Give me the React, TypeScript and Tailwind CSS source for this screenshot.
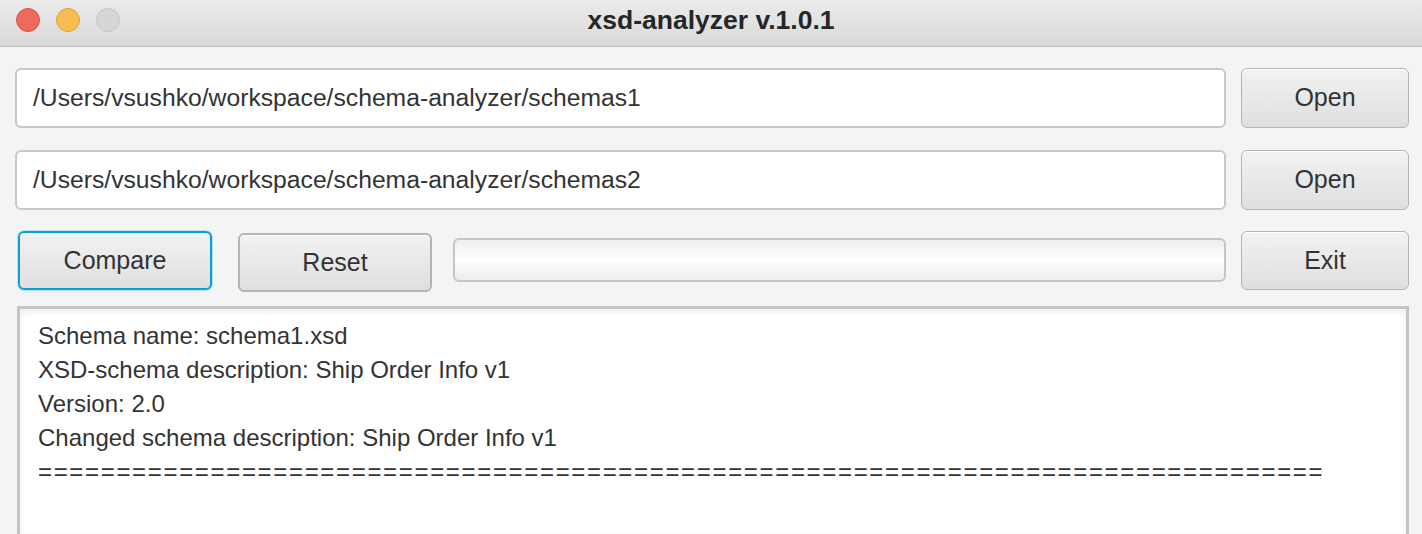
export default function App() {
  const font = { fontFamily: '"Liberation Sans", Arial, sans-serif' };
  const btn =
    "flex items-center justify-center rounded-[6px] border border-[#b4b4b4] bg-gradient-to-b from-[#f2f2f2] to-[#dfdfdf] text-[25px] text-[#333333] shadow-[inset_0_1px_0_#ffffff]";
  const field =
    "flex items-center rounded-[6px] border-2 border-[#c8c8c8] bg-white px-[16px] text-[24.7px] text-[#333333]";
  const lines = [
    "Schema name: schema1.xsd",
    "XSD-schema description: Ship Order Info v1",
    "Version: 2.0",
    "Changed schema description: Ship Order Info v1",
  ];

  return (
    <div className="flex h-[534px] w-[1422px] flex-col overflow-hidden bg-[#f4f4f4]" style={font}>
      <div className="relative flex h-[47px] shrink-0 items-center justify-center border-b border-[#bdbdbd] bg-gradient-to-b from-[#ebebeb] to-[#d9d9d9]">
        <div className="absolute left-[16px] top-[8px] flex gap-[16px]">
          <span className="h-[24px] w-[24px] rounded-full border border-[#d9534c] bg-[#ee6a5f]" />
          <span className="h-[24px] w-[24px] rounded-full border border-[#d9a23c] bg-[#f5be4f]" />
          <span className="h-[24px] w-[24px] rounded-full border border-[#c4c4c4] bg-[#d6d6d6]" />
        </div>
        <span className="-mt-[4px] text-[26.5px] font-bold text-[#262626]">xsd-analyzer v.1.0.1</span>
      </div>

      <div className="flex flex-1 flex-col pl-[15px] pr-[13px] pt-[21px]">
        <div className="flex gap-[15px]">
          <div className={`${field} h-[60px] flex-1`}>/Users/vsushko/workspace/schema-analyzer/schemas1</div>
          <div className={`${btn} h-[60px] w-[168px]`}>Open</div>
        </div>
        <div className="mt-[22px] flex gap-[15px]">
          <div className={`${field} h-[60px] flex-1`}>/Users/vsushko/workspace/schema-analyzer/schemas2</div>
          <div className={`${btn} h-[60px] w-[168px]`}>Open</div>
        </div>
        <div className="mt-[21px] flex items-start">
          <div className="ml-[3px] flex h-[59px] w-[194px] items-center justify-center rounded-[6px] border-2 border-[#0a9fd8] bg-gradient-to-b from-[#f2f2f2] to-[#dfdfdf] text-[25px] text-[#333333] shadow-[0_0_0_1px_#b9e2f3]">
            Compare
          </div>
          <div className={`${btn} ml-[26px] mt-[2px] h-[59px] w-[194px] border-2`}>Reset</div>
          <div className="ml-[21px] mt-[7px] h-[44px] flex-1 rounded-[6px] border-2 border-[#c6c6c6] bg-gradient-to-b from-[#eeeeee] via-[#ffffff] to-[#ececec]" />
          <div className={`${btn} ml-[15px] h-[59px] w-[168px]`}>Exit</div>
        </div>
        <div className="mt-[14px] ml-[2px] flex-1 border-[3px] border-b-0 border-[#c4c4c4] bg-white pl-[18px] pt-[10px] shadow-[inset_0_3px_6px_rgba(0,0,0,0.08)]">
          {lines.map((l, i) => (
            <div key={i} className="h-[34px] text-[24px] leading-[34px] text-[#333333]">
              {l}
            </div>
          ))}
          <div className="h-[34px] text-[24px] leading-[34px] tracking-[1.67px] text-[#333333]">
            {"=".repeat(82)}
          </div>
        </div>
      </div>
    </div>
  );
}
